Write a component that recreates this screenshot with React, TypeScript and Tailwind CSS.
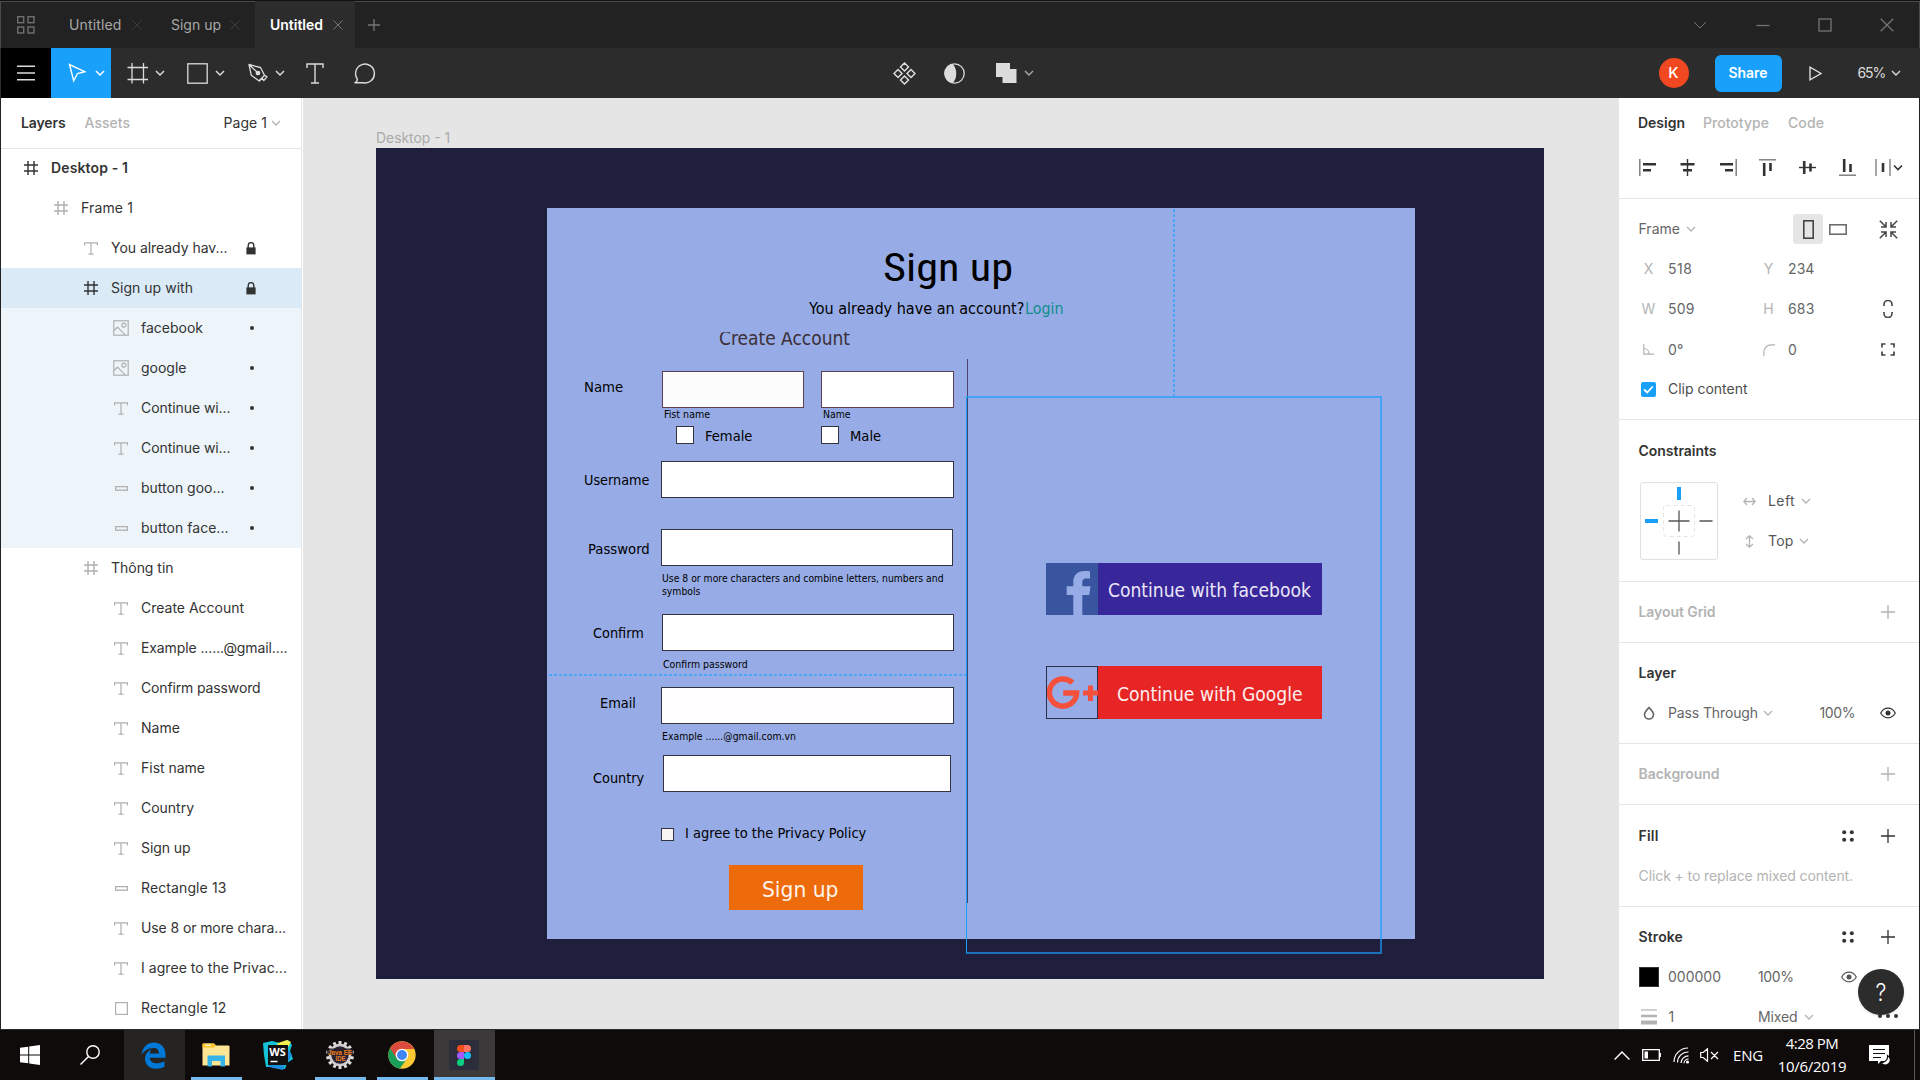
import React, { useLayoutEffect, useRef } from "react";

/* ---------- text helpers ---------- */

/** Interface text tracked out (or in) to an exact advance width. */
function Txt({ children, w, className = "" }: { children: string; w: number; className?: string }) {
  const ref = useRef<HTMLSpanElement>(null);
  useLayoutEffect(() => {
    const el = ref.current;
    if (!el) return;
    el.style.letterSpacing = "0px";
    const natural = el.getBoundingClientRect().width;
    el.style.letterSpacing = `${(w + 1.5 - natural) / children.length}px`;
  }, [children, w]);
  return (
    <span ref={ref} className={`inline-block whitespace-pre ${className}`}>
      {children}
    </span>
  );
}

const ORIGIN_X = 303;
const ORIGIN_Y = 98;

/** Text node on the canvas, placed by its baseline and scaled to its width. */
function CanvasText({
  x,
  base,
  w,
  size,
  className = "",
  children,
}: {
  x: number;
  base: number;
  w: number;
  size: number;
  className?: string;
  children: string;
}) {
  const ref = useRef<HTMLSpanElement>(null);
  useLayoutEffect(() => {
    const el = ref.current;
    if (!el) return;
    el.style.transform = `scaleX(${(w + size * 0.07) / el.offsetWidth})`;
  }, [w, size]);
  return (
    <span
      ref={ref}
      className={`absolute origin-left whitespace-pre leading-[30px] ${className}`}
      style={{ left: x - ORIGIN_X - size * 0.03, top: base - ORIGIN_Y - 15 - size * 0.346, fontSize: size }}
    >
      {children}
    </span>
  );
}

function Box({
  x,
  y,
  r,
  b,
  className = "",
  children,
}: {
  x: number;
  y: number;
  r: number;
  b: number;
  className?: string;
  children?: React.ReactNode;
}) {
  return (
    <div
      className={`absolute ${className}`}
      style={{ left: x - ORIGIN_X, top: y - ORIGIN_Y, width: r - x, height: b - y }}
    >
      {children}
    </div>
  );
}

/* ---------- icons ---------- */

type IcProps = { w: number; h: number; sw?: number; className?: string; children: React.ReactNode };
function Ic({ w, h, sw = 1, className = "", children }: IcProps) {
  return (
    <svg
      width={w}
      height={h}
      viewBox={`0 0 ${w} ${h}`}
      fill="none"
      stroke="currentColor"
      strokeWidth={sw}
      className={`block shrink-0 ${className}`}
    >
      {children}
    </svg>
  );
}

const Chevron = ({ className = "", sw = 1.3 }: { className?: string; sw?: number }) => (
  <Ic w={10} h={8} sw={sw} className={className}>
    <path d="M1 2l4 4 4-4" />
  </Ic>
);
const Close = ({ className = "" }: { className?: string }) => (
  <Ic w={12} h={12} className={className}>
    <path d="M1.5 1.5l9 9M10.5 1.5l-9 9" />
  </Ic>
);
const Plus = ({ className = "" }: { className?: string }) => (
  <Ic w={14} h={14} sw={1.3} className={className}>
    <path d="M7 0v14M0 7h14" />
  </Ic>
);
const FrameIcon = ({ className = "" }: { className?: string }) => (
  <Ic w={14} h={14} sw={1.4} className={className}>
    <path d="M4 0v14M10 0v14M0 4h14M0 10h14" />
  </Ic>
);
const TextIcon = () => (
  <Ic w={14} h={13} sw={1.2}>
    <path d="M.6 3.5V.8h12.8v2.7M7 .8v11.4M4.5 12.2h5" />
  </Ic>
);
const ImageIcon = () => (
  <Ic w={16} h={16} sw={1.2}>
    <rect x=".8" y=".8" width="14.4" height="14.4" />
    <circle cx="10.8" cy="5.2" r="2" />
    <path d="M1 10.5l3.5-3.3 7.6 7.6" />
  </Ic>
);
const BarIcon = () => (
  <Ic w={13} h={5} sw={1.3}>
    <rect x=".6" y=".6" width="11.8" height="3.6" />
  </Ic>
);
const SquareIcon = () => (
  <Ic w={13} h={13} sw={1.2}>
    <rect x=".6" y=".6" width="11.8" height="11.8" />
  </Ic>
);
const LockIcon = () => (
  <Ic w={10} h={13} sw={1.4}>
    <rect x=".4" y="5.4" width="9.2" height="7" fill="currentColor" stroke="none" />
    <path d="M2.2 6V3.4a2.8 2.8 0 0 1 5.6 0V6" />
  </Ic>
);
const Eye = () => (
  <Ic w={16} h={12} sw={1.2}>
    <path d="M.7 6C2.4 2.9 5 1.2 8 1.2S13.6 2.9 15.3 6C13.6 9.1 11 10.8 8 10.8S2.4 9.1.7 6z" />
    <circle cx="8" cy="6" r="2.5" fill="currentColor" stroke="none" />
  </Ic>
);
const FourDots = () => (
  <Ic w={12} h={12}>
    <g fill="currentColor" stroke="none">
      <circle cx="2.2" cy="2.2" r="2" />
      <circle cx="9.8" cy="2.2" r="2" />
      <circle cx="2.2" cy="9.8" r="2" />
      <circle cx="9.8" cy="9.8" r="2" />
    </g>
  </Ic>
);

/* ---------- title bar ---------- */

function TitleBar() {
  return (
    <div className="flex h-12 shrink-0 border-t border-[#111] bg-[#222]">
      <div className="flex h-full flex-1 items-center border-x border-t border-[#4b4b4b] pb-px">
        <div className="w-[68px] pl-[16px] text-[#6f6f6f]">
          <Ic w={18} h={18} sw={1.4}>
            <rect x=".7" y=".7" width="6" height="6" />
            <rect x="11" y=".7" width="6" height="6" />
            <rect x=".7" y="11" width="6" height="6" />
            <rect x="11" y="11" width="6" height="6" />
          </Ic>
        </div>
        <div className="flex w-[102px] items-center text-[#a8a8a8]">
          <Txt w={51}>Untitled</Txt>
          <Close className="ml-[9px] text-[#3d3d3d]" />
        </div>
        <div className="flex w-[84px] items-center text-[#a8a8a8]">
          <Txt w={48.5}>Sign up</Txt>
          <Close className="ml-[8px] text-[#3d3d3d]" />
        </div>
        <div className="flex h-[47px] w-[100px] items-center bg-[#2c2c2c] pl-[15px] font-semibold text-white">
          <Txt w={51.5}>Untitled</Txt>
          <Close className="ml-[9px] text-[#777]" />
        </div>
        <Ic w={12} h={12} className="ml-[13px] text-[#777]" sw={1.3}>
          <path d="M6 0v12M0 6h12" />
        </Ic>
        <div className="ml-auto flex w-[250px] text-[#757575]">
          <div className="flex w-[62px] justify-center">
            <Ic w={14} h={14}>
              <path d="M1 4l6 6 6-6" />
            </Ic>
          </div>
          <div className="flex w-[63px] justify-center">
            <Ic w={14} h={14} sw={1.3}>
              <path d="M.5 7.5h13" />
            </Ic>
          </div>
          <div className="flex w-[62px] justify-center">
            <Ic w={14} h={14} sw={1.3}>
              <rect x="1" y="1" width="12" height="12" />
            </Ic>
          </div>
          <div className="flex w-[62px] justify-center">
            <Ic w={14} h={14} sw={1.3}>
              <path d="M.7.7l12.6 12.6M13.3.7L.7 13.3" />
            </Ic>
          </div>
        </div>
      </div>
    </div>
  );
}

/* ---------- toolbar ---------- */

function Tool({ children, active = false }: { children: React.ReactNode; active?: boolean }) {
  return (
    <div className={`flex h-full w-[60px] items-center ${active ? "bg-[#18a0fb] text-white" : ""}`}>
      <div className="ml-[14px] flex w-6 justify-center">{children}</div>
      <Chevron className="ml-[6px]" sw={1.5} />
    </div>
  );
}

function Toolbar() {
  return (
    <div className="flex h-[50px] shrink-0 items-center bg-[#2c2c2c] pl-px text-[#dcdcdc]">
      <div className="flex h-full w-[50px] items-center justify-center bg-black">
        <Ic w={18} h={16} sw={1.4}>
          <path d="M0 1.2h18M0 8h18M0 14.8h18" />
        </Ic>
      </div>
      <Tool active>
        <Ic w={18} h={20} sw={1.4}>
          <path d="M1.5 1.5l4.2 16.3 3.8-7.3 7.3-1.8z" />
        </Ic>
      </Tool>
      <Tool>
        <Ic w={21} h={21} sw={1.3} className="ml-px">
          <path d="M5 0v20.5M16.5 0v20.5M.5 4.5h20.5M.5 16.5h20.5" />
        </Ic>
      </Tool>
      <Tool>
        <Ic w={21} h={21} sw={1.3}>
          <rect x=".8" y=".8" width="19.4" height="19.4" />
        </Ic>
      </Tool>
      <Tool>
        <Ic w={20} h={21} sw={1.3} className="ml-px">
          <path d="M1 1.5l2.3 10.8 7.9 5.7 5.3-5.8-4-7.7zM1 1.5l9 8.5" strokeLinejoin="round" />
          <path d="M13.8 15.2l2 2.3 3.2-3.6-2.4-1.7M11.2 18l2.6-2.8" strokeLinejoin="round" />
          <circle cx="10" cy="10" r="1.7" fill="currentColor" />
        </Ic>
      </Tool>
      <div className="flex w-[50px] justify-center">
        <Ic w={18} h={21} sw={1.4} className="-ml-[2px]">
          <path d="M1 5V1h16v4M9 1v19M5 20h8" />
        </Ic>
      </div>
      <div className="flex w-[50px] justify-center">
        <Ic w={23} h={21} sw={1.4} className="-ml-px">
          <path d="M1 19.7c1.5-.6 2.3-2 2.3-3.8A9.4 9.4 0 1 1 9 19.7z" strokeLinejoin="round" />
        </Ic>
      </div>
      <div className="ml-[488px] flex w-[50px] justify-center">
        <Ic w={23} h={23} sw={1.5}>
          <path d="M11.5 1l4 4-4 4-4-4zM11.5 14l4 4-4 4-4-4zM5 7.5l4 4-4 4-4-4zM18 7.5l4 4-4 4-4-4z" />
        </Ic>
      </div>
      <div className="flex w-[50px] justify-center">
        <Ic w={21} h={21} sw={1.3}>
          <circle cx="10.5" cy="10.5" r="9.7" />
          <path d="M8.5.9C13.5 5 13.5 16 8.5 20A9.7 9.7 0 0 1 8.5.9z" fill="currentColor" stroke="none" />
        </Ic>
      </div>
      <div className="flex w-[60px] items-center">
        <Ic w={21} h={20} className="ml-[17px]">
          <path d="M0 0h14v6h6.5v14h-14v-6H0z" fill="currentColor" stroke="none" />
        </Ic>
        <Chevron className="ml-[7px] text-[#aaa]" sw={1.4} />
      </div>
      <div className="ml-auto flex items-center pr-[19px]">
        <div className="flex h-[30px] w-[30px] items-center justify-center rounded-full bg-[#f24822] text-[15px] font-medium text-white">
          K
        </div>
        <div className="ml-[26px] flex h-[37px] w-[67px] items-center justify-center rounded-[6px] bg-[#18a0fb] font-semibold text-white">
          <Txt w={37.5}>Share</Txt>
        </div>
        <Ic w={13} h={15} sw={1.4} className="ml-[27px]">
          <path d="M1 1.2v12.6l11-6.3z" />
        </Ic>
        <Txt w={26} className="ml-[36px]">
          65%
        </Txt>
        <Chevron className="ml-[6px]" sw={1.4} />
      </div>
    </div>
  );
}

/* ---------- layers panel ---------- */

type Layer = { d: number; icon: "frame" | "text" | "image" | "bar" | "square"; t: string; w: number; end?: "lock" | "dot" };
const layers: Layer[] = [
  { d: 0, icon: "frame", t: "Desktop - 1", w: 75.5 },
  { d: 1, icon: "frame", t: "Frame 1", w: 50.5 },
  { d: 2, icon: "text", t: "You already hav...", w: 115, end: "lock" },
  { d: 2, icon: "frame", t: "Sign up with", w: 80.5, end: "lock" },
  { d: 3, icon: "image", t: "facebook", w: 60.5, end: "dot" },
  { d: 3, icon: "image", t: "google", w: 44, end: "dot" },
  { d: 3, icon: "text", t: "Continue wi...", w: 88, end: "dot" },
  { d: 3, icon: "text", t: "Continue wi...", w: 88, end: "dot" },
  { d: 3, icon: "bar", t: "button goo...", w: 82, end: "dot" },
  { d: 3, icon: "bar", t: "button face...", w: 86, end: "dot" },
  { d: 2, icon: "frame", t: "Thông tin", w: 61 },
  { d: 3, icon: "text", t: "Create Account", w: 101.5 },
  { d: 3, icon: "text", t: "Example ......@gmail....", w: 145 },
  { d: 3, icon: "text", t: "Confirm password", w: 118 },
  { d: 3, icon: "text", t: "Name", w: 37.5 },
  { d: 3, icon: "text", t: "Fist name", w: 62.5 },
  { d: 3, icon: "text", t: "Country", w: 51.5 },
  { d: 3, icon: "text", t: "Sign up", w: 48 },
  { d: 3, icon: "bar", t: "Rectangle 13", w: 84 },
  { d: 3, icon: "text", t: "Use 8 or more chara...", w: 143.5 },
  { d: 3, icon: "text", t: "I agree to the Privac...", w: 144.5 },
  { d: 3, icon: "square", t: "Rectangle 12", w: 84 },
];
const indent = ["w-[20px]", "w-[50px]", "w-[80px]", "w-[110px]"];

function LayersPanel() {
  return (
    <div className="flex w-[302px] shrink-0 flex-col overflow-hidden border-l border-r border-l-[#222] border-r-[#e5e5e5] bg-white text-[#333]">
      <div className="flex h-[51px] shrink-0 items-center border-b border-[#e5e5e5] pl-[20px] pr-[20px]">
        <Txt w={43} className="font-semibold">
          Layers
        </Txt>
        <Txt w={44} className="ml-[19px] font-medium text-[#b3b3b3]">
          Assets
        </Txt>
        <Txt w={42} className="ml-auto">
          Page 1
        </Txt>
        <Chevron className="ml-[4px] text-[#b3b3b3]" />
      </div>
      <div className="-mt-px flex flex-col">
        {layers.map((l, i) => (
          <div
            key={i}
            className={`flex h-10 shrink-0 items-center ${
              i === 3 ? "bg-[#daebf7]" : i > 3 && i < 10 ? "bg-[#edf5fa]" : ""
            } ${i === 0 ? "font-semibold" : ""}`}
          >
            <div className={`shrink-0 ${indent[l.d]}`} />
            <div className={`flex w-5 shrink-0 justify-center ${i === 0 || i === 3 ? "text-[#333]" : "text-[#b0b0b0]"}`}>
              {l.icon === "frame" && <FrameIcon />}
              {l.icon === "text" && <TextIcon />}
              {l.icon === "image" && <ImageIcon />}
              {l.icon === "bar" && <BarIcon />}
              {l.icon === "square" && <SquareIcon />}
            </div>
            <Txt w={l.w} className="ml-[10px]">
              {l.t}
            </Txt>
            {l.end === "lock" && (
              <div className="ml-auto mr-[45.5px]">
                <LockIcon />
              </div>
            )}
            {l.end === "dot" && <div className="ml-auto mr-[47px] size-1 rounded-full bg-[#333]" />}
          </div>
        ))}
      </div>
    </div>
  );
}

/* ---------- canvas ---------- */

const field = "border border-[#33343f] bg-white";

function Canvas() {
  return (
    <div className="relative ml-px min-w-0 flex-1 overflow-hidden bg-[#e5e5e5] font-['DejaVu_Sans_Condensed','DejaVu_Sans',sans-serif] text-black [font-stretch:condensed]">
      <CanvasText x={376} base={142.5} w={73.5} size={14} className="font-['Inter',sans-serif] text-[#aaa]">
        Desktop - 1
      </CanvasText>
      <Box x={376} y={148} r={1544} b={979} className="bg-[#1f1e3d]" />
      <Box x={547} y={208} r={1415} b={939} className="bg-[#97ace6]" />

      <CanvasText x={884.5} base={281.5} w={127} size={39} className="font-['Roboto',sans-serif]">
        Sign up
      </CanvasText>
      <CanvasText x={809.5} base={314.5} w={214} size={16.25}>
        You already have an account?
      </CanvasText>
      <CanvasText x={1025.5} base={314.5} w={37} size={16.25} className="text-[#128c8c]">
        Login
      </CanvasText>
      <CanvasText x={720} base={346} w={130} size={19.5} className="text-[#3b2f38] [clip-path:inset(7.9px_0_0_0)]">
        Create Account
      </CanvasText>

      <CanvasText x={584.5} base={392} w={38.5} size={14.6}>Name</CanvasText>
      <Box x={662} y={371} r={804} b={408} className="border border-[#613f52] bg-[#fcfcfc]" />
      <Box x={821} y={371} r={954} b={408} className="border border-[#613f52] bg-white" />
      <CanvasText x={664} base={418} w={45} size={9.75}>Fist name</CanvasText>
      <CanvasText x={823.5} base={418} w={27} size={9.75}>Name</CanvasText>
      <Box x={676} y={426} r={694} b={444} className={field} />
      <CanvasText x={705.5} base={441} w={46} size={14.6}>Female</CanvasText>
      <Box x={821} y={426} r={839} b={444} className={field} />
      <CanvasText x={850.5} base={441} w={30} size={14.6}>Male</CanvasText>

      <CanvasText x={584.5} base={485.5} w={64.5} size={14.6}>Username</CanvasText>
      <Box x={661} y={461} r={954} b={498} className={field} />

      <CanvasText x={588.5} base={554} w={60.5} size={14.6}>Password</CanvasText>
      <Box x={661} y={529} r={953} b={566} className={field} />
      <CanvasText x={662} base={582.5} w={281} size={9.75}>
        Use 8 or more characters and combine letters, numbers and
      </CanvasText>
      <CanvasText x={662} base={595.5} w={37.5} size={9.75}>symbols</CanvasText>

      <CanvasText x={593} base={638.3} w={50} size={14.6}>Confirm</CanvasText>
      <Box x={662} y={614} r={954} b={651} className={field} />
      <CanvasText x={663.5} base={668.2} w={84} size={9.75}>Confirm password</CanvasText>

      <CanvasText x={600.5} base={707.7} w={34.5} size={14.6}>Email</CanvasText>
      <Box x={661} y={687} r={954} b={724} className="border border-[#33343f] bg-[#fffdfd]" />
      <CanvasText x={662} base={740.3} w={133.5} size={9.75}>Example ......@gmail.com.vn</CanvasText>

      <CanvasText x={593} base={783} w={50} size={14.6}>Country</CanvasText>
      <Box x={663} y={755} r={951} b={792} className={field} />

      <Box x={661} y={828} r={674} b={841} className="border border-[#33343f] bg-[#f8f4f4]" />
      <CanvasText x={685.5} base={838} w={180} size={14.6}>I agree to the Privacy Policy</CanvasText>
      <Box x={729} y={865} r={863} b={910} className="bg-[#ee6b0b]" />
      <CanvasText x={763} base={897.5} w={75} size={21.5} className="text-[#fdf3ea]">Sign up</CanvasText>

      <Box x={967} y={359} r={968} b={903} className="bg-[#4a4270]" />

      {/* social buttons */}
      <Box x={1046} y={562.5} r={1322} b={615} className="flex">
        <svg width="52" height="52.5" viewBox="0 0 52 52.5" className="block shrink-0">
          <path
            fillRule="evenodd"
            fill="#39559f"
            d="M0 0h52v52.5H36.3V32h7l1.2-8.7h-8.2V19.5c0-2.5.8-4.1 4.2-4.1H44V8.2c-1-.1-3-.2-5.5-.2-6.5 0-11.2 3.8-11.2 10.8v4.5h-6.6V32h6.6v20.5H0z"
          />
        </svg>
        <div className="flex-1 bg-[#38269b]" />
      </Box>
      <CanvasText x={1108.5} base={596.2} w={201.5} size={19} className="text-[#ece6f6]">
        Continue with facebook
      </CanvasText>
      <Box x={1046} y={666} r={1322} b={718.5} className="flex">
        <div className="w-[52px] border border-[#2b2f4a]">
          <svg width="51" height="51" viewBox="0 0 51 51" className="block">
            <path
              d="M25.5 15.8A13.6 13.6 0 1 0 29.6 26H16.2"
              fill="none"
              stroke="#f4503c"
              strokeWidth="5.5"
            />
            <path d="M36 26h15M43.5 18.5v15.5" stroke="#f4503c" strokeWidth="5" />
          </svg>
        </div>
        <div className="flex-1 bg-[#e72525]" />
      </Box>
      <CanvasText x={1117.5} base={700.5} w={184} size={19} className="text-[#fdeeee]">
        Continue with Google
      </CanvasText>

      {/* selection outline and constraint guides */}
      <Box
        x={966}
        y={396}
        r={1382}
        b={954}
        className="border-2 border-l border-[#18a0fb]/65 border-l-[#18a0fb]"
      />
      <Box
        x={549}
        y={674}
        r={966}
        b={676}
        className="bg-[repeating-linear-gradient(90deg,#4aa5f2_0_3px,transparent_3px_5px)]"
      />
      <Box
        x={1173}
        y={209}
        r={1175}
        b={396}
        className="bg-[repeating-linear-gradient(180deg,#4aa5f2_0_3px,transparent_3px_5px)]"
      />
    </div>
  );
}

/* ---------- design panel ---------- */

const Field = ({ icon, value, w }: { icon: React.ReactNode; value: string; w: number }) => (
  <div className="flex w-[120px] items-center">
    <div className="flex w-[20px] justify-center text-[#b3b3b3]">{icon}</div>
    <Txt w={w} className="ml-[9.5px]">
      {value}
    </Txt>
  </div>
);

const section = "shrink-0 border-b border-[#e5e5e5] pl-[19.5px] pr-[24px]";

function AlignRow() {
  const items = [
    <Ic key="l" w={17} h={17} sw={2}>
      <path d="M.8 0v17" strokeWidth="1.4" stroke="#777" />
      <path d="M4 5.2h13M4 11.2h8" strokeWidth="2.6" />
    </Ic>,
    <Ic key="c" w={17} h={17}>
      <path d="M8.5 0v17" strokeWidth="1.4" />
      <path d="M1.5 5.2h14M4 11.2h9" strokeWidth="2.6" />
    </Ic>,
    <Ic key="r" w={17} h={17} className="ml-px">
      <path d="M16.2 0v17" strokeWidth="1.4" stroke="#777" />
      <path d="M0 5.2h13M5 11.2h8" strokeWidth="2.6" />
    </Ic>,
    <Ic key="t" w={17} h={17}>
      <path d="M0 .8h17" strokeWidth="1.4" stroke="#777" />
      <path d="M5.2 4v13M11.5 4v8" strokeWidth="2.6" />
    </Ic>,
    <Ic key="m" w={17} h={17}>
      <path d="M0 8.5h17" strokeWidth="1.4" />
      <path d="M5.2 2v13M11.5 4.5v8" strokeWidth="2.6" />
    </Ic>,
    <Ic key="b" w={17} h={17}>
      <path d="M0 16.2h17" strokeWidth="1.4" stroke="#777" />
      <path d="M5.2 0v13M11.5 5v8" strokeWidth="2.6" />
    </Ic>,
  ];
  return (
    <div className="flex h-[50px] items-center text-[#333]">
      {items.map((it, i) => (
        <div key={i} className="w-[40px] shrink-0">
          {it}
        </div>
      ))}
      <Ic w={30} h={17} className="-ml-[5px]">
        <path d="M2 0v17M16 0v17" strokeWidth="1.3" stroke="#777" />
        <path d="M9 4v9" strokeWidth="2.6" />
        <path d="M20 6.5l4 4 4-4" strokeWidth="1.6" />
      </Ic>
    </div>
  );
}

function DesignPanel() {
  return (
    <div className="flex w-[301px] shrink-0 flex-col overflow-hidden border-r border-[#222] bg-white text-[#666]">
      <div className="h-[101px] shrink-0 border-b border-[#e5e5e5] pl-[20px]">
        <div className="-ml-px flex h-[50px] items-center font-medium text-[#b3b3b3]">
          <Txt w={45.5} className="font-semibold text-[#333]">
            Design
          </Txt>
          <Txt w={64.5} className="ml-[18px]">
            Prototype
          </Txt>
          <Txt w={34.5} className="ml-[19px]">
            Code
          </Txt>
        </div>
        <div className="-mt-[6px]">
          <AlignRow />
        </div>
      </div>

      <div className={`h-[221px] ${section} pt-[10px]`}>
        <div className="flex h-10 items-center">
          <Txt w={40}>Frame</Txt>
          <Chevron className="ml-[6px] text-[#b3b3b3]" />
          <div className="ml-auto flex size-[30px] items-center justify-center rounded-[3px] bg-[#e5e5e5] text-[#444]">
            <Ic w={11} h={19} sw={1.6}>
              <rect x=".8" y=".8" width="9.4" height="17.4" />
            </Ic>
          </div>
          <Ic w={18} h={11} sw={1.5} className="ml-[6px]">
            <rect x=".8" y=".8" width="16.4" height="9.4" />
          </Ic>
          <Ic w={19} h={19} sw={1.5} className="-mr-[3px] ml-[32px] text-[#444]">
            <path d="M.8.8l6 6M7 2v5H2M18.2.8l-6 6M12 2v5h5M.8 18.2l6-6M7 17v-5H2M18.2 18.2l-6-6M12 17v-5h5" />
          </Ic>
        </div>
        <div className="flex h-10 items-center">
          <Field icon={<span>X</span>} value="518" w={23} />
          <Field icon={<span>Y</span>} value="234" w={25} />
        </div>
        <div className="flex h-10 items-center">
          <Field icon={<span>W</span>} value="509" w={25} />
          <Field icon={<span>H</span>} value="683" w={25} />
          <Ic w={10} h={18} sw={1.6} className="ml-auto mr-[2px] text-[#444]">
            <path d="M1 6V4.5a4 4 0 0 1 8 0V6M1 12v1.5a4 4 0 0 0 8 0V12" />
          </Ic>
        </div>
        <div className="flex h-10 items-center pt-px">
          <Field
            icon={
              <Ic w={11} h={11} sw={1.2}>
                <path d="M.8 0v10.2H11M1 4.5c3 0 5 2.5 5 5.5" />
              </Ic>
            }
            value="0°"
            w={14}
          />
          <Field
            icon={
              <Ic w={12} h={12} sw={1.2}>
                <path d="M.8 12V8.5C.8 4 4 .8 8.5.8H12" />
              </Ic>
            }
            value="0"
            w={8}
          />
          <Ic w={14} h={13} sw={1.7} className="ml-auto text-[#444]">
            <path d="M1 4.5V1h3.5M9.5 1H13v3.5M13 8.5V12H9.5M4.5 12H1V8.5" />
          </Ic>
        </div>
        <div className="flex h-10 items-center">
          <div className="ml-[2.5px] flex size-[15px] items-center justify-center rounded-[2px] bg-[#18a0fb] text-white">
            <Ic w={11} h={9} sw={1.8}>
              <path d="M1 4.5l3.2 3 5.5-6" />
            </Ic>
          </div>
          <Txt w={78} className="ml-[12px] text-[#4d4d4d]">
            Clip content
          </Txt>
        </div>
      </div>

      <div className={`h-[162px] ${section}`}>
        <div className="flex h-[62px] items-center font-semibold text-[#333]">
          <Txt w={76.5}>Constraints</Txt>
        </div>
        <div className="flex">
          <div className="ml-[1.5px] flex size-[78px] items-center justify-center rounded-[3px] border border-[#e0e0e0]">
            <Ic w={68} h={68}>
              <path d="M34 0v13" stroke="#18a0fb" strokeWidth="4" />
              <path d="M0 34h13" stroke="#18a0fb" strokeWidth="4" />
              <path d="M54.5 34h13M34 54.5v13M23.5 34h21M34 23.5v21" stroke="#555" strokeWidth="1.3" />
              <rect x="18.5" y="18.5" width="31" height="31" rx="3" stroke="#e5e5e5" strokeDasharray="4 3" />
            </Ic>
          </div>
          <div className="ml-[25px] -mt-px text-[#555]">
            <div className="flex h-10 items-center">
              <Ic w={13} h={9} sw={1.3} className="text-[#b3b3b3]">
                <path d="M.8 4.5h11.4M4 1L.8 4.5 4 8M9 1l3.2 3.5L9 8" />
              </Ic>
              <Txt w={25.5} className="ml-[12px]">
                Left
              </Txt>
              <Chevron className="ml-[6px] text-[#b3b3b3]" />
            </div>
            <div className="flex h-10 items-center">
              <Ic w={13} h={13} sw={1.3} className="text-[#b3b3b3]">
                <path d="M6.5.8v11.4M3 4L6.5.8 10 4M3 9l3.5 3.2L10 9" />
              </Ic>
              <Txt w={24} className="ml-[12px]">
                Top
              </Txt>
              <Chevron className="ml-[5px] text-[#b3b3b3]" />
            </div>
          </div>
        </div>
      </div>

      <div className={`flex h-[61px] items-center justify-between ${section} font-semibold text-[#b3b3b3]`}>
        <Txt w={75.5}>Layout Grid</Txt>
        <Plus />
      </div>

      <div className={`h-[101px] ${section}`}>
        <div className="flex h-[60px] items-center font-semibold text-[#333]">
          <Txt w={36}>Layer</Txt>
        </div>
        <div className="-mt-[10px] flex h-10 items-center">
          <Ic w={12} h={14} sw={1.6} className="ml-[4px]">
            <path d="M6 1.5C3.5 4.2 1.5 6 1.5 8.5a4.5 4.5 0 0 0 9 0C10.5 6 8.5 4.2 6 1.5z" />
          </Ic>
          <Txt w={88.5} className="ml-[13.5px]">
            Pass Through
          </Txt>
          <Chevron className="ml-[5px] text-[#b3b3b3]" />
          <Txt w={34} className="ml-auto">
            100%
          </Txt>
          <div className="-mr-px ml-[25px] text-[#333]">
            <Eye />
          </div>
        </div>
      </div>

      <div className={`flex h-[61px] items-center justify-between ${section} font-semibold text-[#b3b3b3]`}>
        <Txt w={79.5}>Background</Txt>
        <Plus />
      </div>

      <div className={`h-[102px] ${section}`}>
        <div className="flex h-[61px] items-center pt-px font-semibold text-[#333]">
          <Txt w={18.5}>Fill</Txt>
          <div className="ml-auto">
            <FourDots />
          </div>
          <Plus className="ml-[27px]" />
        </div>
        <div className="-mt-[10px] flex h-10 items-center text-[#b3b3b3]">
          <Txt w={213}>Click + to replace mixed content.</Txt>
        </div>
      </div>

      <div className="shrink-0 pl-[19.5px] pr-[24px]">
        <div className="flex h-[60px] items-center font-semibold text-[#333]">
          <Txt w={43}>Stroke</Txt>
          <div className="ml-auto">
            <FourDots />
          </div>
          <Plus className="ml-[27px]" />
        </div>
        <div className="-mt-[10px] flex h-10 items-center">
          <div className="size-[20px] border border-[#333] bg-black" />
          <Txt w={51.5} className="ml-[9.5px]">
            000000
          </Txt>
          <Txt w={34} className="ml-[37px]">
            100%
          </Txt>
          <div className="ml-auto mr-[38px] text-[#555]">
            <Eye />
          </div>
        </div>
        <div className="flex h-10 items-center">
          <Ic w={16} h={16} className="ml-[2px] text-[#b3b3b3]">
            <path d="M0 1h16" strokeWidth="1.2" />
            <path d="M0 7h16" strokeWidth="2.5" />
            <path d="M0 13.5h16" strokeWidth="4" />
          </Ic>
          <Txt w={6} className="ml-[12px]">
            1
          </Txt>
          <Txt w={38} className="ml-[82px]">
            Mixed
          </Txt>
          <Chevron className="ml-[6px] text-[#b3b3b3]" />
          <Ic w={20} h={4} className="-mr-[3px] mb-[2px] ml-auto text-[#333]">
            <g fill="currentColor" stroke="none">
              <circle cx="2" cy="2" r="2" />
              <circle cx="10" cy="2" r="2" />
              <circle cx="18" cy="2" r="2" />
            </g>
          </Ic>
        </div>
      </div>
    </div>
  );
}

/* ---------- taskbar ---------- */

function Slot({ children, bg = "", line = "" }: { children: React.ReactNode; bg?: string; line?: string }) {
  return (
    <div className={`flex h-full shrink-0 flex-col items-center justify-end ${bg}`}>
      <div className="flex flex-1 items-center justify-center pt-[3px]">{children}</div>
      <div className={`h-[3px] ${line || "w-0"}`} />
    </div>
  );
}

function GearTeeth() {
  const teeth = Array.from({ length: 14 }, (_, i) => (i * 360) / 14);
  return (
    <g fill="#dcdcdc">
      {teeth.map((a) => (
        <rect key={a} x="12.5" y="0" width="3" height="5" transform={`rotate(${a} 14 14)`} />
      ))}
    </g>
  );
}

function Taskbar() {
  return (
    <div className="flex h-[50px] shrink-0 bg-[#0f0b0b] font-['Open_Sans','Noto_Sans',sans-serif] text-white">
      <Slot bg="w-[60px]">
        <svg width="20" height="20" viewBox="0 0 20 20" fill="#fff">
          <path d="M0 2.8l8.2-1.1v7.8H0zM9.2 1.5L20 0v9.5H9.2zM0 10.5h8.2v7.8L0 17.2zM9.2 10.5H20V20L9.2 18.5z" />
        </svg>
      </Slot>
      <Slot bg="w-[64px]">
        <svg width="20" height="20" viewBox="0 0 20 20" fill="none" stroke="#fff" strokeWidth="1.4" className="-ml-1">
          <circle cx="13" cy="7" r="6.2" />
          <path d="M8.5 11.5L.5 19.5" />
        </svg>
      </Slot>
      <Slot bg="w-[61px] bg-[#262323]">
        <svg width="25" height="27" viewBox="0 0 25 27" fill="#0078d7" className="-ml-[2px]">
          <path d="M.5 12.5C1.6 5 6.6.5 13 .5c7 0 11.500 5 11.500 12v3.200H8.700c.2 4 3.800 5.600 7.600 5.600 2.700 0 5.200-.8 7.200-2v5.500c-2.300 1.300-5.200 2-8.300 2C8.500 26.800 4 22.500 4 17c0-4.800 2.700-8 6.500-9.800-1.200 1.400-1.700 2.800-1.800 4.300h9.300c0-3.700-1.900-5.600-5.500-5.600C7.500 5.900 3 8.800.5 12.500z" />
        </svg>
      </Slot>
      <Slot bg="w-[62px]" line="w-[51px] bg-[#76b9ed]">
        <svg width="28" height="24" viewBox="0 0 28 24">
          <path d="M.5 1.5A1 1 0 0 1 1.5.5H12l2 2h12.500a1 1 0 0 1 1 1V22.500H.5z" fill="#ffe694" />
          <path d="M.5 1A.7.7 0 0 1 1 .5h11l1.500 2-1.500 2H.5z" fill="#fdc128" />
          <path d="M3 1.500h6v1.500H3z" fill="#fff4c9" />
          <path d="M5.500 12.500h17.500V23.500h-4.500V18H10v5.500H5.500z" fill="#36b3e8" />
        </svg>
      </Slot>
      <Slot bg="w-[62px]">
        <svg width="30" height="30" viewBox="0 0 30 30">
          <path d="M0 3l9-2 8 2 8-3 4 5-2 6 3 8-6 4-2 6-13-2-6 0L1 15z" fill="#14c4d6" />
          <path d="M15 3l9-3 4 2-3 5-12-1z" fill="#f4ee4e" />
          <path d="M24 8l5 7-4 7zM5 23h17l-2 7-14-3z" fill="#1b8fe0" />
          <rect x="5" y="5" width="20" height="20" fill="#111" />
          <path d="M7.500 21.500h7" stroke="#fff" strokeWidth="1.5" />
          <text x="6.3" y="16" fill="#fff" fontSize="11" fontWeight="700" textLength="16.5" lengthAdjust="spacingAndGlyphs">
            WS
          </text>
        </svg>
      </Slot>
      <Slot bg="w-[62px]" line="w-[51px] bg-[#76b9ed]">
        <svg width="28" height="28" viewBox="0 0 28 28" className="overflow-visible">
          <GearTeeth />
          <circle cx="14" cy="14" r="10" fill="#2a2338" stroke="#cfcfcf" strokeWidth="2.5" />
          <path d="M1 7.500h26v6.500H1z" fill="#241c26" opacity=".85" />
          <g fill="#f0801e" fontSize="8" fontWeight="700" fontFamily="Liberation Sans">
            <text x="2" y="13.5" textLength="24" lengthAdjust="spacingAndGlyphs">Java EE</text>
            <text x="9.5" y="20" textLength="10" lengthAdjust="spacingAndGlyphs">IDE</text>
          </g>
        </svg>
      </Slot>
      <Slot bg="w-[63px]" line="w-[51px] bg-[#76b9ed]">
        <svg width="28" height="28" viewBox="0 0 28 28" className="-ml-px">
          <circle cx="14" cy="14" r="13.7" fill="#fcc934" />
          <path d="M14 14L2.1 7.2A13.7 13.7 0 0 0 12 27.6l7.400-10.500z" fill="#1a9f5a" />
          <path d="M2.1 7.2A13.7 13.7 0 0 1 26 8H14l-5.500 9z" fill="#dc4a3d" />
          <circle cx="14" cy="14" r="6.3" fill="#fff" />
          <circle cx="14" cy="14" r="5" fill="#4285f4" />
        </svg>
      </Slot>
      <Slot bg="w-[61px] bg-[#3b3939]" line="w-full bg-[#76b9ed]">
        <div className="-ml-px flex size-[30px] items-center justify-center rounded-[2px] bg-[#2b2d3a]">
          <svg width="14" height="21" viewBox="0 0 14 21">
            <path d="M7 0H3.500a3.500 3.500 0 0 0 0 7H7z" fill="#f24e1e" />
            <path d="M7 0h3.500a3.500 3.500 0 0 1 0 7H7z" fill="#ff7262" />
            <path d="M7 7H3.500a3.500 3.500 0 0 0 0 7H7z" fill="#a259ff" />
            <circle cx="10.5" cy="10.5" r="3.5" fill="#1abcfe" />
            <path d="M7 14H3.500A3.500 3.500 0 1 0 7 17.500z" fill="#0acf83" />
          </svg>
        </div>
      </Slot>

      <div className="ml-auto flex h-full items-center text-[15px] leading-none">
        <Ic w={16} h={9} sw={1.4}>
          <path d="M.6 8.4L8 1l7.4 7.4" />
        </Ic>
        <Ic w={19} h={12} sw={1.3} className="ml-[12px]">
          <path d="M.7.7h16.6v10.6H.7zM18.3 4v4" />
          <path d="M2.500 2.500H6v7H2.500z" fill="#fff" stroke="none" />
        </Ic>
        <Ic w={17} h={17} sw={1.2} className="ml-[12px]">
          <path d="M1 15A14 14 0 0 1 15 1M4.500 15.500A10.500 10.500 0 0 1 15.500 5M8 16a7.500 7.500 0 0 1 7.500-7.200M11 16.200a4.500 4.500 0 0 1 4.700-4.200" />
          <circle cx="14.5" cy="15" r="1.6" fill="#fff" stroke="none" />
        </Ic>
        <Ic w={19} h={14} sw={1.2} className="ml-[10px]">
          <path d="M.7 4.500v5h2.500l4.300 3.800V.7L3.200 4.500zM11 4l7 7M18 4l-7 7" />
        </Ic>
        <Txt w={28.5} className="ml-[14px]">
          ENG
        </Txt>
        <div className="ml-[15px] flex w-[68px] flex-col items-center gap-[8px]">
          <Txt w={51}>4:28 PM</Txt>
          <Txt w={67}>10/6/2019</Txt>
        </div>
        <svg width="22" height="21" viewBox="0 0 22 21" className="ml-[23px] block">
          <path d="M0 0h20v16h-8l-3 3v-3H0z" fill="#fff" />
          <path d="M4 4.500h12M4 8.500h12M4 12.500h8" stroke="#111" strokeWidth="1.2" />
          <path d="M18.500 10.500a5 5 0 1 1-6.500 7 6 6 0 0 0 6.500-7z" fill="#fff" stroke="#0f0b0b" strokeWidth="1.2" />
        </svg>
        <div className="ml-[23px] mr-[5px] h-full w-px bg-[#5a5757]" />
      </div>
    </div>
  );
}

/* ---------- page ---------- */

export default function App() {
  return (
    <div className="relative flex h-[1080px] w-[1920px] flex-col overflow-hidden bg-white font-['Inter',sans-serif] text-[14px] leading-5">
      <TitleBar />
      <Toolbar />
      <div className="flex h-[931px] shrink-0">
        <LayersPanel />
        <Canvas />
        <DesignPanel />
      </div>
      <div className="h-px shrink-0 bg-[#2a2a2a]" />
      <Taskbar />
      <div className="absolute left-[1858px] top-[969px] flex size-[46px] items-center justify-center rounded-full bg-[#2c2c2c] pt-px text-[24px] font-light text-white shadow">
        <span className="scale-x-90">?</span>
      </div>
    </div>
  );
}
